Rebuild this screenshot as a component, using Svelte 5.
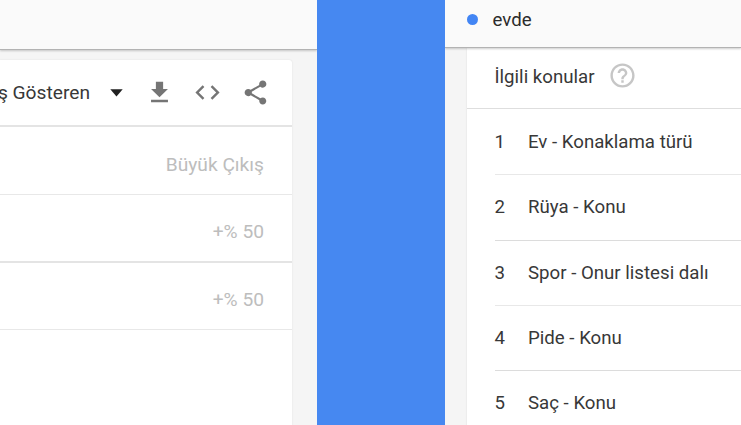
<script lang="ts">
	interface Topic {
		rank: number;
		label: string;
	}

	const changes: string[] = ['Büyük Çıkış', '+% 50', '+% 50'];

	const topics: Topic[] = [
		{ rank: 1, label: 'Ev - Konaklama türü' },
		{ rank: 2, label: 'Rüya - Konu' },
		{ rank: 3, label: 'Spor - Onur listesi dalı' },
		{ rank: 4, label: 'Pide - Konu' },
		{ rank: 5, label: 'Saç - Konu' }
	];
</script>

<div class="page">
	<section class="pane queries">
		<div class="bar"></div>
		<div class="card">
			<header class="card-head">
				<span class="sort">ş Gösteren</span>
				<svg class="caret" width="13" height="8" viewBox="0 0 13 8"><path d="M0.3 0.3h12.4L6.5 7.5z" /></svg>
				<svg class="icon download" width="29" height="29" viewBox="0 0 24 24">
					<path d="M19 9h-4V3H9v6H5l7 7 7-7zM5 18v2h14v-2H5z" />
				</svg>
				<svg class="icon embed" width="29" height="29" viewBox="0 0 24 24">
					<path d="M9.4 16.6L4.8 12l4.6-4.6L8 6l-6 6 6 6 1.4-1.4zm5.2 0l4.6-4.6-4.6-4.6L16 6l6 6-6 6-1.4-1.4z" />
				</svg>
				<svg class="icon share" width="29" height="29" viewBox="0 0 24 24">
					<path
						d="M18 16.08c-.76 0-1.44.3-1.96.77L8.91 12.7c.05-.23.09-.46.09-.7s-.04-.47-.09-.7l7.05-4.11c.54.5 1.25.81 2.04.81 1.66 0 3-1.34 3-3s-1.34-3-3-3-3 1.34-3 3c0 .24.04.47.09.7L8.04 9.81C7.5 9.31 6.79 9 6 9c-1.66 0-3 1.34-3 3s1.34 3 3 3c.79 0 1.5-.31 2.04-.81l7.12 4.16c-.05.21-.08.43-.08.65 0 1.61 1.31 2.92 2.92 2.92s2.92-1.31 2.92-2.92-1.31-2.92-2.92-2.92z"
					/>
				</svg>
			</header>
			{#each changes as change, i}
				<div class="change" class:strong={i === 1}>{change}</div>
			{/each}
		</div>
	</section>

	<div class="divider"></div>

	<section class="pane topics">
		<div class="bar">
			<span class="dot"></span>
			<span class="term">evde</span>
		</div>
		<div class="card">
			<header class="card-head">
				<span class="title">İlgili konular</span>
				<svg class="help" width="29" height="29" viewBox="0 0 24 24">
					<path
						d="M11 18h2v-2h-2v2zm1-16C6.48 2 2 6.48 2 12s4.48 10 10 10 10-4.48 10-10S17.52 2 12 2zm0 18c-4.41 0-8-3.59-8-8s3.59-8 8-8 8 3.59 8 8-3.59 8-8 8zm0-14c-2.21 0-4 1.79-4 4h2c0-1.1.9-2 2-2s2 .9 2 2c0 2-3 1.75-3 5h2c0-2.25 3-2.5 3-5 0-2.21-1.79-4-4-4z"
					/>
				</svg>
			</header>
			<ol>
				{#each topics as topic}
					<li class:strong={topic.rank % 2 === 0}>
						<span class="rank">{topic.rank}</span>
						<span>{topic.label}</span>
					</li>
				{/each}
			</ol>
		</div>
	</section>
</div>

<style>
	:global(body) {
		overflow: hidden;
	}

	.page {
		display: flex;
		width: 741px;
		height: 425px;
		overflow: hidden;
		background: #f5f5f5;
		color: #383838;
		font: 400 18.67px/24px Roboto, sans-serif;
		white-space: nowrap;
	}

	.pane {
		display: flex;
		flex-direction: column;
		overflow: hidden;
	}

	.bar {
		position: relative;
		box-sizing: border-box;
		flex: none;
		display: flex;
		align-items: center;
		background: #fafafa;
		border-bottom: 1px solid #b3b3b3;
		box-shadow: 0 1px 2px rgba(0, 0, 0, 0.2);
	}

	.card {
		flex: 1;
		background: #fff;
		box-shadow: 0 0 2px rgba(0, 0, 0, 0.1);
	}

	.card-head {
		box-sizing: border-box;
		display: flex;
		align-items: center;
		border-bottom: 2px solid #e4e4e4;
	}

	svg {
		flex: none;
		display: block;
	}

	.queries {
		width: 317px;
		font-size: 19.2px;
	}

	.queries .bar {
		height: 50px;
	}

	.queries .card {
		margin: 10px 25px 0 0;
		border-top-right-radius: 3px;
	}

	.queries .card-head {
		height: 67px;
	}

	/* the label is cut off by the left edge of the pane */
	.sort {
		display: flex;
		justify-content: flex-end;
		width: 90px;
	}

	.caret {
		margin-left: 20px;
		fill: #212121;
	}

	.icon {
		fill: #757575;
	}

	.download {
		margin-left: 22px;
	}

	.embed,
	.share {
		margin-left: 19px;
	}

	.change {
		box-sizing: border-box;
		height: 68px;
		padding: 26px 28px 0 0;
		border-bottom: 1px solid #e8e8e8;
		color: #bdbdbd;
		text-align: right;
	}

	.change.strong {
		padding-top: 25px;
		border-bottom: 2px solid #e4e4e4;
	}

	.change:last-child {
		height: 67px;
		padding-top: 25px;
	}

	.divider {
		flex: none;
		width: 128px;
		background: #4688f1;
	}

	.topics {
		flex: 1;
	}

	.topics .bar {
		height: 48px;
		padding: 0 0 8px 22px;
		color: #2b2b2b;
	}

	.dot {
		width: 11px;
		height: 11px;
		border-radius: 50%;
		background: #4285f4;
	}

	.term {
		margin-left: 14.5px;
	}

	.topics .card {
		margin-left: 22px;
	}

	.topics .card-head {
		height: 61px;
		padding: 0 0 5px 27.5px;
		border-bottom-width: 1px;
		border-bottom-color: #dedede;
	}

	.title {
		padding-top: 2px;
	}

	.help {
		margin-left: 13px;
		fill: #c6c6c6;
	}

	ol {
		margin: 0;
		padding: 1px 0 0 27.5px;
		list-style: none;
	}

	li {
		box-sizing: border-box;
		display: flex;
		align-items: center;
		height: 65.33px;
		border-bottom: 1px solid #e8e8e8;
	}

	li.strong {
		border-bottom-color: #dcdcdc;
	}

	.rank {
		width: 33.5px;
	}
</style>
